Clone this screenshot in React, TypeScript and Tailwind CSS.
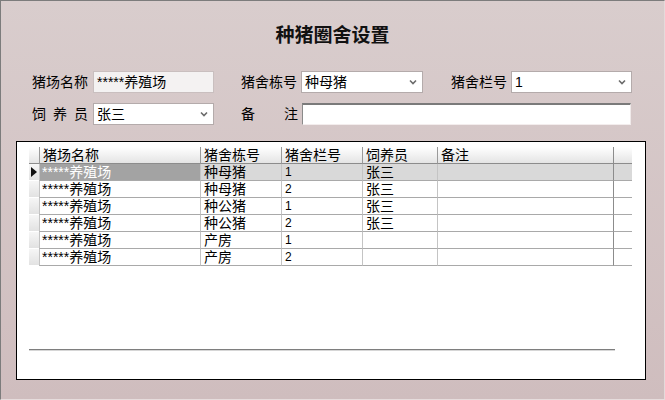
import React from 'react';

const FONT = { fontFamily: '"Liberation Sans", "Noto Sans CJK SC", sans-serif' };

const rows = [
  { farm: '*****养殖场', house: '种母猪', pen: '1', keeper: '张三', note: '' },
  { farm: '*****养殖场', house: '种母猪', pen: '2', keeper: '张三', note: '' },
  { farm: '*****养殖场', house: '种公猪', pen: '1', keeper: '张三', note: '' },
  { farm: '*****养殖场', house: '种公猪', pen: '2', keeper: '张三', note: '' },
  { farm: '*****养殖场', house: '产房', pen: '1', keeper: '', note: '' },
  { farm: '*****养殖场', house: '产房', pen: '2', keeper: '', note: '' },
];

function Chevron() {
  return (
    <svg width="8" height="6" viewBox="0 0 8 6" className="shrink-0">
      <path d="M1 1.5 L4 4.5 L7 1.5" fill="none" stroke="#6b6b6b" strokeWidth="1.6" />
    </svg>
  );
}

function Select({ value, width }: { value: string; width: string }) {
  return (
    <div
      className={`${width} h-[22px] bg-white border border-[#b4abab] flex items-center justify-between pl-[3px] pr-[5px] text-[14px] leading-[20px] text-black`}
    >
      <span>{value}</span>
      <Chevron />
    </div>
  );
}

function Label({ chars }: { chars: string[] }) {
  return (
    <div className="w-[56px] flex justify-between text-[14px] leading-[22px] text-black">
      {chars.map((c, i) => (
        <span key={i}>{c}</span>
      ))}
    </div>
  );
}

const cols = 'grid grid-cols-[10px_161px_81px_81px_75px_176px_19px]';

export default function App() {
  return (
    <div
      style={FONT}
      className="w-[665px] h-[400px] box-border border-t border-l border-[#7c7c7c] border-r border-r-[#e4dada] border-b border-b-[#e6dcdc] bg-linear-to-b from-[#d9cdcd] to-[#cfbdbe] flex flex-col overflow-hidden"
    >
      <div className="mt-[24px] h-[22px] leading-[22px] text-center text-[19px] font-bold text-[#111]">
        种猪圈舍设置
      </div>

      <div className="mt-[24px] ml-[31px] flex items-center h-[22px]">
        <Label chars={['猪场名称']} />
        <div className="ml-[5px] w-[121px] h-[22px] bg-[#f4f2f2] border border-[#c9bfbf] pl-[3px] text-[14px] leading-[20px] text-black">
          *****养殖场
        </div>
        <div className="ml-[27px]">
          <Label chars={['猪舍栋号']} />
        </div>
        <div className="ml-[4px]">
          <Select value="种母猪" width="w-[122px]" />
        </div>
        <div className="ml-[28px]">
          <Label chars={['猪舍栏号']} />
        </div>
        <div className="ml-[4px]">
          <Select value="1" width="w-[121px]" />
        </div>
      </div>

      <div className="mt-[10px] ml-[31px] flex items-center h-[22px]">
        <Label chars={['饲', '养', '员']} />
        <div className="ml-[5px]">
          <Select value="张三" width="w-[121px]" />
        </div>
        <div className="ml-[27px] w-[57px] flex justify-between text-[14px] leading-[22px] text-black">
          <span>备</span>
          <span>注</span>
        </div>
        <div className="ml-[4px] w-[329px] h-[22px] bg-white border-t-2 border-l border-t-[#7a7a7a] border-l-[#8a8a8a] border-r border-b border-r-[#f0eaea] border-b-[#f3eded]" />
      </div>

      <div className="mt-[16px] ml-[15px] w-[630px] h-[239px] box-border border border-black bg-white flex flex-col">
        <div className="mt-[5px] ml-[12px] flex flex-col">
          <div className={`${cols} h-[17px] text-[14px] leading-[16px] text-black`}>
            <div className="bg-linear-to-b from-white to-[#e4e4e4] border-b border-[#8c8c8c]" />
            {['猪场名称', '猪舍栋号', '猪舍栏号', '饲养员', '备注'].map((h) => (
              <div
                key={h}
                className="bg-linear-to-b from-white to-[#e4e4e4] border-l border-[#9a9a9a] border-b border-b-[#8c8c8c] pl-[3px]"
              >
                {h}
              </div>
            ))}
            <div className="bg-linear-to-b from-white to-[#e4e4e4] border-l border-[#8c8c8c] border-b border-b-[#8c8c8c]" />
          </div>
          {rows.map((r, i) => {
            const sel = i === 0;
            const cell = `h-[17px] border-l border-[#c4c4c4] border-b border-b-[#a9a9a9] pl-[3px] ${sel ? 'bg-[#d9d9d9]' : 'bg-white'}`;
            return (
              <div key={i} className={`${cols} text-[14px] leading-[16px] text-black`}>
                <div className="h-[17px] bg-linear-to-b from-[#f6f6f6] to-[#e2e2e2] border-b border-b-white flex items-center justify-center">
                  {sel && (
                    <svg width="6" height="10" viewBox="0 0 6 10">
                      <path d="M0 0 L6 5 L0 10 Z" fill="#111" />
                    </svg>
                  )}
                </div>
                <div
                  className={`h-[17px] border-l border-[#c4c4c4] border-b border-b-[#a9a9a9] pl-[2px] ${sel ? 'bg-[#a3a3a3] text-white' : 'bg-white'}`}
                >
                  {r.farm}
                </div>
                <div className={cell}>{r.house}</div>
                <div className={`${cell} text-[12px]`}>{r.pen}</div>
                <div className={cell}>{r.keeper}</div>
                <div className={cell}>{r.note}</div>
                <div className={`h-[17px] border-l border-[#8c8c8c] border-b border-b-[#a9a9a9] ${sel ? 'bg-[#d9d9d9]' : 'bg-white'}`} />
              </div>
            );
          })}
        </div>
        <div className="mt-[83px] ml-[12px] w-[586px] h-[2px] border-t border-[#7e7e7e] border-b border-b-[#d6d6d6]" />
      </div>
    </div>
  );
}
